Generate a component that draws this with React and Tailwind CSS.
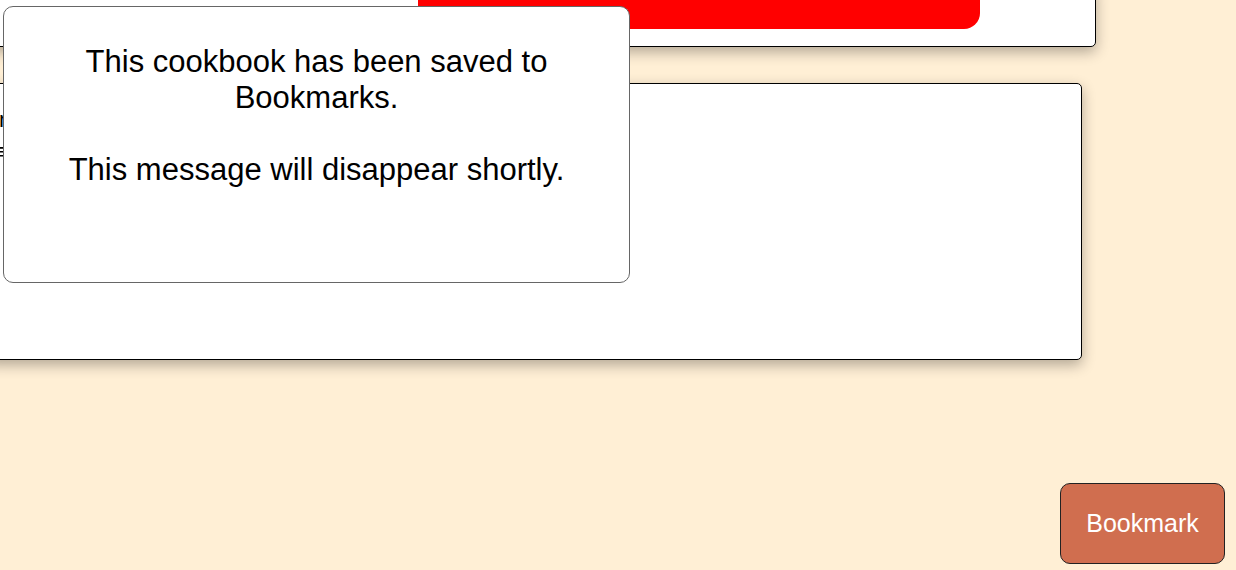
export default function App() {
  return (
    <div className="relative w-[1236px] h-[570px] overflow-hidden bg-[#ffefd5]" style={{ fontFamily: '"Liberation Sans", Arial, sans-serif' }}>
      <div className="flex flex-col">
        <div className="-mt-[14px] -ml-[14px] w-[1110px] h-[61px] bg-white border border-black rounded-br-[5px] shadow-[0_5px_14px_rgba(0,0,0,0.3)]">
          <div className="ml-[431px] w-[562px] h-[42px] bg-[#ff0000] rounded-b-[16px]"></div>
        </div>
        <div className="mt-[36px] -ml-[14px] w-[1096px] h-[277px] bg-white border border-black rounded-[5px] shadow-[0_5px_14px_rgba(0,0,0,0.3)] pt-[20px] pl-[6px] text-[22px] leading-[32px] text-black">
          <div>In</div>
          <div>≡</div>
        </div>
      </div>

      <div className="absolute left-[3px] top-[6px] w-[627px] h-[277px] bg-white border border-[#666] rounded-[10px] pt-[37px] px-[20px] text-center text-[31px] leading-[36px] text-black">
        This cookbook has been saved to Bookmarks.
        <br />
        <br />
        This message will disappear shortly.
      </div>

      <button className="absolute left-[1060px] top-[483px] w-[165px] h-[81px] bg-[#d06e4f] border border-[#222] rounded-[10px] text-white text-[25px]">
        Bookmark
      </button>
    </div>
  );
}
